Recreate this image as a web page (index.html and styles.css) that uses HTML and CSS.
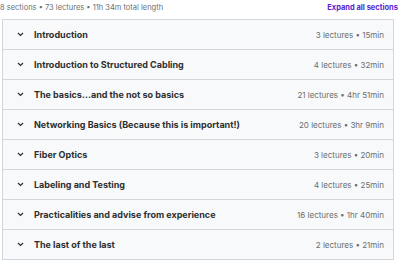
FILE: index.html
```html
<!DOCTYPE html>
<html>
<head>
<meta charset="utf-8">
<link rel="stylesheet" href="styles.css">
</head>
<body>
<div class="page">
  <div class="summary">
    <span class="meta">8 sections • 73 lectures • 11h 34m total length</span>
    <span class="expand">Expand all sections</span>
  </div>
  <div class="sections">
    <div class="row"><span class="chev"><svg width="7" height="5" viewBox="0 0 7 5"><path d="M1 1 L3.5 3.5 L6 1" fill="none" stroke="#2d2f31" stroke-width="1.2"/></svg></span><span class="title">Introduction</span><span class="info">3 lectures • 15min</span></div>
    <div class="row"><span class="chev"><svg width="7" height="5" viewBox="0 0 7 5"><path d="M1 1 L3.5 3.5 L6 1" fill="none" stroke="#2d2f31" stroke-width="1.2"/></svg></span><span class="title">Introduction to Structured Cabling</span><span class="info">4 lectures • 32min</span></div>
    <div class="row"><span class="chev"><svg width="7" height="5" viewBox="0 0 7 5"><path d="M1 1 L3.5 3.5 L6 1" fill="none" stroke="#2d2f31" stroke-width="1.2"/></svg></span><span class="title">The basics...and the not so basics</span><span class="info">21 lectures • 4hr 51min</span></div>
    <div class="row"><span class="chev"><svg width="7" height="5" viewBox="0 0 7 5"><path d="M1 1 L3.5 3.5 L6 1" fill="none" stroke="#2d2f31" stroke-width="1.2"/></svg></span><span class="title">Networking Basics (Because this is important!)</span><span class="info">20 lectures • 3hr 9min</span></div>
    <div class="row"><span class="chev"><svg width="7" height="5" viewBox="0 0 7 5"><path d="M1 1 L3.5 3.5 L6 1" fill="none" stroke="#2d2f31" stroke-width="1.2"/></svg></span><span class="title">Fiber Optics</span><span class="info">3 lectures • 20min</span></div>
    <div class="row"><span class="chev"><svg width="7" height="5" viewBox="0 0 7 5"><path d="M1 1 L3.5 3.5 L6 1" fill="none" stroke="#2d2f31" stroke-width="1.2"/></svg></span><span class="title">Labeling and Testing</span><span class="info">4 lectures • 25min</span></div>
    <div class="row"><span class="chev"><svg width="7" height="5" viewBox="0 0 7 5"><path d="M1 1 L3.5 3.5 L6 1" fill="none" stroke="#2d2f31" stroke-width="1.2"/></svg></span><span class="title">Practicalities and advise from experience</span><span class="info">16 lectures • 1hr 40min</span></div>
    <div class="row"><span class="chev"><svg width="7" height="5" viewBox="0 0 7 5"><path d="M1 1 L3.5 3.5 L6 1" fill="none" stroke="#2d2f31" stroke-width="1.2"/></svg></span><span class="title">The last of the last</span><span class="info">2 lectures • 21min</span></div>
  </div>
</div>
</body>
</html>
```
FILE: styles.css
```css
* { box-sizing: border-box; }
html, body { margin: 0; padding: 0; background: #ffffff; }
body { font-family: Inter, "Noto Sans", sans-serif; color: #2d2f31; }
.page { width: 400px; height: 263px; overflow: hidden; }
.summary {
  display: flex;
  justify-content: space-between;
  align-items: center;
  height: 15px;
  padding: 0 2px 0 0;
  margin-bottom: 4px;
}
.meta { font-size: 7.5px; color: #6a6f73; }
.expand { font-size: 7.5px; font-weight: 700; color: #5624d0; }
.sections {
  margin: 0 6px 0 2px;
  border: 1px solid #d1d7dc;
  border-bottom: none;
}
.row {
  display: flex;
  align-items: center;
  height: 30px;
  background: #f7f9fa;
  border-bottom: 1px solid #d1d7dc;
  padding: 0 9px 0 14px;
}
.chev { width: 17px; display: flex; align-items: center; }
.title { flex: 1; font-size: 9px; font-weight: 700; }
.info { font-size: 8px; color: #6a6f73; }
```
